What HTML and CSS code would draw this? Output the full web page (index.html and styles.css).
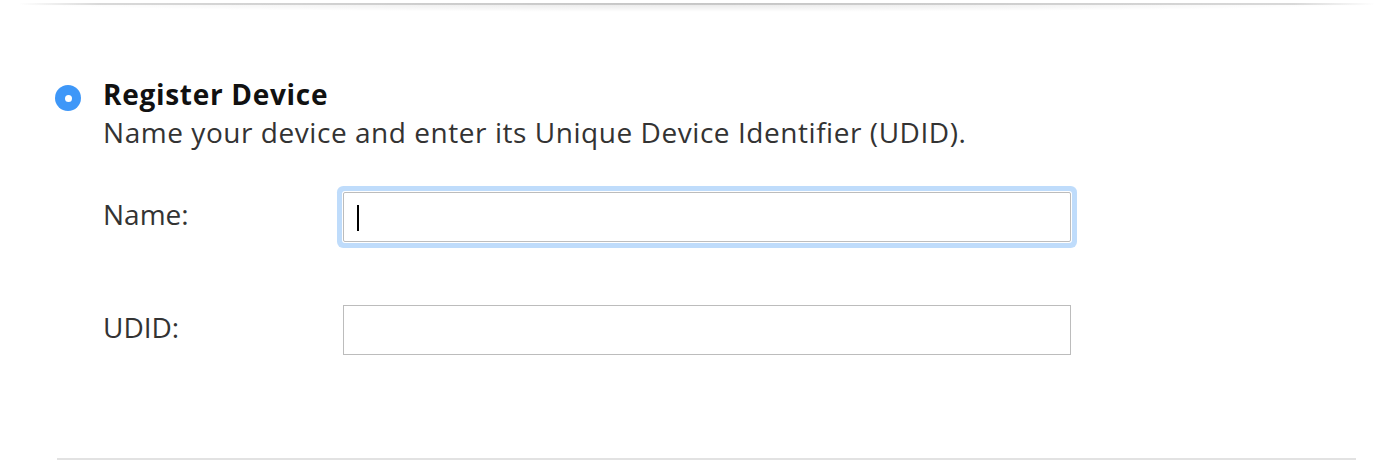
FILE: index.html
```html
<!DOCTYPE html>
<html lang="en">
<head>
<meta charset="utf-8">
<title>Register Device</title>
<link rel="stylesheet" href="styles.css">
</head>
<body>
<div class="topshadow"></div>
<main class="page">
  <section class="option">
    <span class="radio"><span class="dot"></span></span>
    <div class="option-body">
      <h2 class="title">Register Device</h2>
      <p class="desc">Name your device and enter its Unique Device Identifier (UDID).</p>
      <div class="form">
        <div class="row row-name">
          <label class="label" for="name">Name:</label>
          <div class="field focus"><input id="name" class="input" type="text"><span class="caret"></span></div>
        </div>
        <div class="row row-udid">
          <label class="label" for="udid">UDID:</label>
          <div class="field"><input id="udid" class="input" type="text"></div>
        </div>
      </div>
    </div>
  </section>
  <hr class="divider">
</main>
</body>
</html>
```
FILE: styles.css
```css
html, body {
  margin: 0;
  padding: 0;
  background: #ffffff;
}
body {
  font-family: "Open Sans", "Noto Sans", "DejaVu Sans", sans-serif;
  color: #333;
  width: 1394px;
  height: 466px;
  overflow: hidden;
}
.topshadow {
  height: 9px;
  margin: 3px 20px 0;
  background:
    linear-gradient(to right, rgba(0,0,0,0), rgba(0,0,0,0.14) 6%, rgba(0,0,0,0.14) 94%, rgba(0,0,0,0)) top / 100% 2px no-repeat,
    radial-gradient(ellipse 52% 100% at 50% 0%, rgba(0,0,0,0.10), rgba(0,0,0,0.03) 70%, rgba(0,0,0,0) 100%);
}
.page {
  padding: 0 38px 0 57px;
}
.option {
  display: flex;
  align-items: flex-start;
  padding-top: 64px;
}
.radio {
  flex: none;
  width: 26px;
  height: 26px;
  border-radius: 50%;
  background: #3e97f8;
  display: flex;
  align-items: center;
  justify-content: center;
  margin-top: 9px;
  margin-left: -2px;
}
.dot {
  width: 7px;
  height: 7px;
  border-radius: 50%;
  background: #fff;
}
.option-body {
  margin-left: 22px;
}
.title {
  margin: 0;
  font-size: 28px;
  font-weight: 700;
  color: #111;
  line-height: 36px;
  letter-spacing: 0.7px;
}
.desc {
  margin: 0;
  font-size: 28px;
  line-height: 40px;
  color: #333;
  letter-spacing: 0.55px;
}
.form {
  margin-top: 40px;
}
.row {
  display: flex;
  align-items: flex-start;
}
.row-udid {
  margin-top: 63px;
}
.label {
  width: 240px;
  font-size: 28px;
  color: #333;
  line-height: 40px;
  padding-top: 2px;
}
.field {
  position: relative;
  width: 728px;
  height: 50px;
  border: 1px solid #bcbcbc;
  box-sizing: border-box;
  background: #fff;
}
.field.focus {
  box-shadow: 0 0 0 1px #fff, 0 0 0 6px #bfdcfb;
  border-radius: 2px;
}
.input {
  width: 100%;
  height: 100%;
  border: 0;
  outline: none;
  background: transparent;
  box-sizing: border-box;
  padding: 0 12px;
  font: inherit;
}
.caret {
  position: absolute;
  left: 13px;
  top: 12px;
  width: 2px;
  height: 26px;
  background: #000;
}
.divider {
  margin: 103px 0 0 0;
  border: 0;
  height: 2px;
  background: #e2e2e2;
}
```
